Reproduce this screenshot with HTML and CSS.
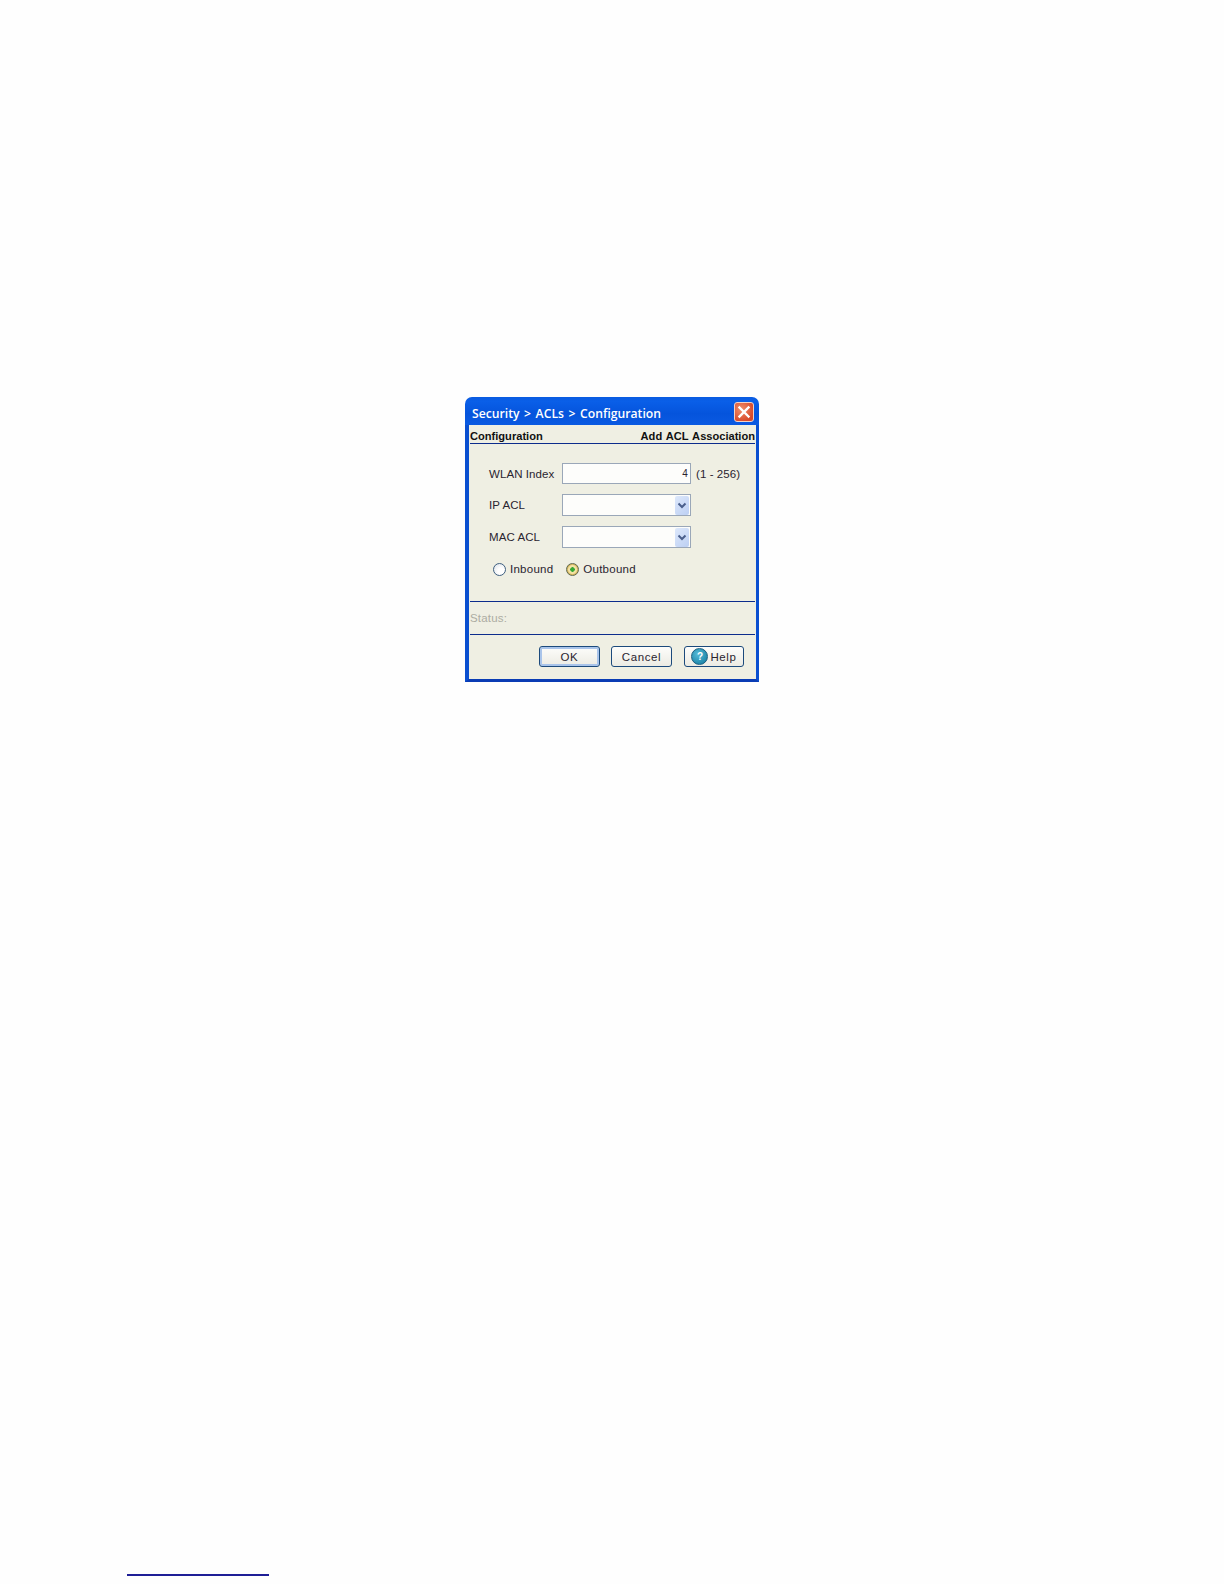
FILE: index.html
```html
<!DOCTYPE html>
<html lang="en">
<head>
<meta charset="utf-8">
<title>Security &gt; ACLs &gt; Configuration</title>
<link rel="stylesheet" href="styles.css">
</head>
<body>
<main class="page">
  <section class="window">
    <header class="titlebar">
      <h1 class="title">Security &gt; ACLs &gt; Configuration</h1>
      <button class="close" type="button" aria-label="Close">
        <svg viewBox="0 0 20 20" width="20" height="20"><path d="M5.5 5.5 14.5 14.5M14.5 5.5 5.5 14.5" stroke="#fff" stroke-width="2.4" stroke-linecap="square" fill="none"/></svg>
      </button>
    </header>
    <div class="body">
      <div class="section-head"><span>Configuration</span><span>Add ACL Association</span></div>
      <div class="form">
        <div class="row row-text">
          <span class="label">WLAN Index</span>
          <span class="field field-num">4</span>
          <span class="hint">(1 - 256)</span>
        </div>
        <div class="row row-select">
          <span class="label">IP ACL</span>
          <span class="field">
            <span class="drop"><svg viewBox="0 0 14 19" width="14" height="19"><path d="M3.5 7.5 7 11l3.5-3.5" stroke="#4a5f8c" stroke-width="2" fill="none"/></svg></span>
          </span>
        </div>
        <div class="row row-select">
          <span class="label">MAC ACL</span>
          <span class="field">
            <span class="drop"><svg viewBox="0 0 14 19" width="14" height="19"><path d="M3.5 7.5 7 11l3.5-3.5" stroke="#4a5f8c" stroke-width="2" fill="none"/></svg></span>
          </span>
        </div>
        <div class="radios">
          <span class="radio-item"><span class="radio"></span>Inbound</span>
          <span class="radio-item"><span class="radio radio-on"></span>Outbound</span>
        </div>
      </div>
      <div class="status">Status:</div>
      <div class="actions">
        <button class="btn btn-default" type="button">OK</button>
        <button class="btn" type="button">Cancel</button>
        <button class="btn btn-help" type="button"><span class="help-icon">?</span>Help</button>
      </div>
    </div>
  </section>
  <div class="footnote-rule"></div>
</main>
</body>
</html>
```

FILE: styles.css
```css
html, body {
  margin: 0;
  background: #fefefe;
}
.page {
  height: 1584px;
  padding: 397px 0 0 465px;
  box-sizing: border-box;
  overflow: hidden;
  font-family: "Liberation Sans", Arial, sans-serif;
  color: #2a2430;
}
.window {
  width: 294px;
  height: 285px;
  display: flex;
  flex-direction: column;
}
.titlebar {
  height: 28px;
  box-sizing: border-box;
  display: flex;
  align-items: center;
  justify-content: space-between;
  padding: 2px 5px 0 7px;
  border-radius: 7px 7px 0 0;
  background: linear-gradient(#0a5be0 0, #0a5fe8 15%, #0554dc 60%, #0a5ae2 100%);
}
.title {
  margin: 0;
  padding-top: 2px;
  font-family: "Open Sans", sans-serif;
  font-size: 12.2px;
  font-weight: 600;
  word-spacing: 1.4px;
  color: #fff;
  white-space: nowrap;
}
.close {
  width: 20px;
  height: 20px;
  padding: 0;
  border: 1px solid #f3d2c6;
  border-radius: 3px;
  background: radial-gradient(circle at 35% 35%, #ef8f6c, #d8492a 75%);
  box-sizing: border-box;
  display: flex;
  align-items: center;
  justify-content: center;
}
.close svg {
  flex: none;
}
.body {
  flex: 1;
  display: flex;
  flex-direction: column;
  background: #efefe3;
  border: solid #0a4fd0;
  border-width: 0 3px 3px 4px;
  border-bottom-color: #0a3cb4;
}
.section-head {
  height: 15px;
  padding-top: 3px;
  margin: 0 1px;
  display: flex;
  align-items: center;
  justify-content: space-between;
  border-bottom: 1px solid #0c2c8c;
  font-size: 11.1px;
  font-weight: 700;
  word-spacing: 1px;
  color: #111;
  box-sizing: content-box;
}
.form {
  padding: 19px 0 0 20px;
  height: 138px;
  box-sizing: content-box;
  display: flex;
  flex-direction: column;
}
.row {
  display: flex;
  align-items: center;
  font-size: 11.5px;
  letter-spacing: 0.08px;
}
.row-text {
  height: 21px;
}
.row-select {
  height: 22px;
  margin-top: 10px;
}
.label {
  width: 73px;
  flex: none;
}
.field {
  width: 129px;
  height: 100%;
  flex: none;
  box-sizing: border-box;
  border: 1px solid #9aa7b8;
  background: #fdfdfb;
  display: flex;
  align-items: center;
  justify-content: flex-end;
}
.field-num {
  padding-right: 2px;
  font-size: 10px;
}
.drop {
  width: 14px;
  height: 19px;
  margin-right: 1px;
  border-radius: 2px;
  background: linear-gradient(135deg, #dde8fb, #bccff3);
  display: flex;
}
.hint {
  margin-left: 5px;
}
.radios {
  margin: 13px 0 0 4px;
  height: 16px;
  display: flex;
  align-items: center;
  gap: 13px;
  font-size: 11.5px;
  letter-spacing: 0.25px;
}
.radio-item {
  display: flex;
  align-items: center;
  gap: 4px;
}
.radio {
  width: 13px;
  height: 13px;
  box-sizing: border-box;
  border: 1px solid #3f5f80;
  border-radius: 50%;
  background: radial-gradient(circle at 65% 65%, #fff 30%, #dfe4ea 90%);
}
.radio-on {
  border-color: #5f6a50;
  background: radial-gradient(circle, #35a835 0 2px, #f2e3a6 2.5px 4px, #d8b860 5px);
}
.status {
  margin: 0 1px;
  height: 32px;
  display: flex;
  align-items: center;
  border-top: 1px solid #0c2c8c;
  border-bottom: 1px solid #0c2c8c;
  font-size: 11.5px;
  letter-spacing: 0.2px;
  color: #acaca2;
}
.actions {
  flex: 1;
  padding: 11px 12px 0 0;
  display: flex;
  justify-content: flex-end;
  align-items: flex-start;
  gap: 11px;
}
.btn {
  width: 61px;
  height: 21px;
  padding: 0;
  box-sizing: border-box;
  border: 1px solid #1c4a7c;
  border-radius: 3px;
  background: linear-gradient(#fdfdfb, #ecebe3);
  font-family: "Liberation Sans", Arial, sans-serif;
  font-size: 11.5px;
  letter-spacing: 0.6px;
  color: #2a2430;
  display: flex;
  align-items: center;
  justify-content: center;
}
.btn-default {
  box-shadow: inset 0 0 0 2px #a9c4ea;
}
.btn-help {
  width: 60px;
  margin-left: 1px;
  gap: 2px;
}
.help-icon {
  width: 17px;
  height: 17px;
  border-radius: 50%;
  background: radial-gradient(circle at 40% 35%, #58bcd8, #1b85a8 80%);
  border: 1px solid #1c5f80;
  box-sizing: border-box;
  color: #fff;
  font-size: 10px;
  font-weight: 700;
  letter-spacing: 0;
  display: flex;
  align-items: center;
  justify-content: center;
}
.footnote-rule {
  width: 142px;
  height: 2px;
  margin: 892px 0 0 -338px;
  background: #1e1e96;
}
```
